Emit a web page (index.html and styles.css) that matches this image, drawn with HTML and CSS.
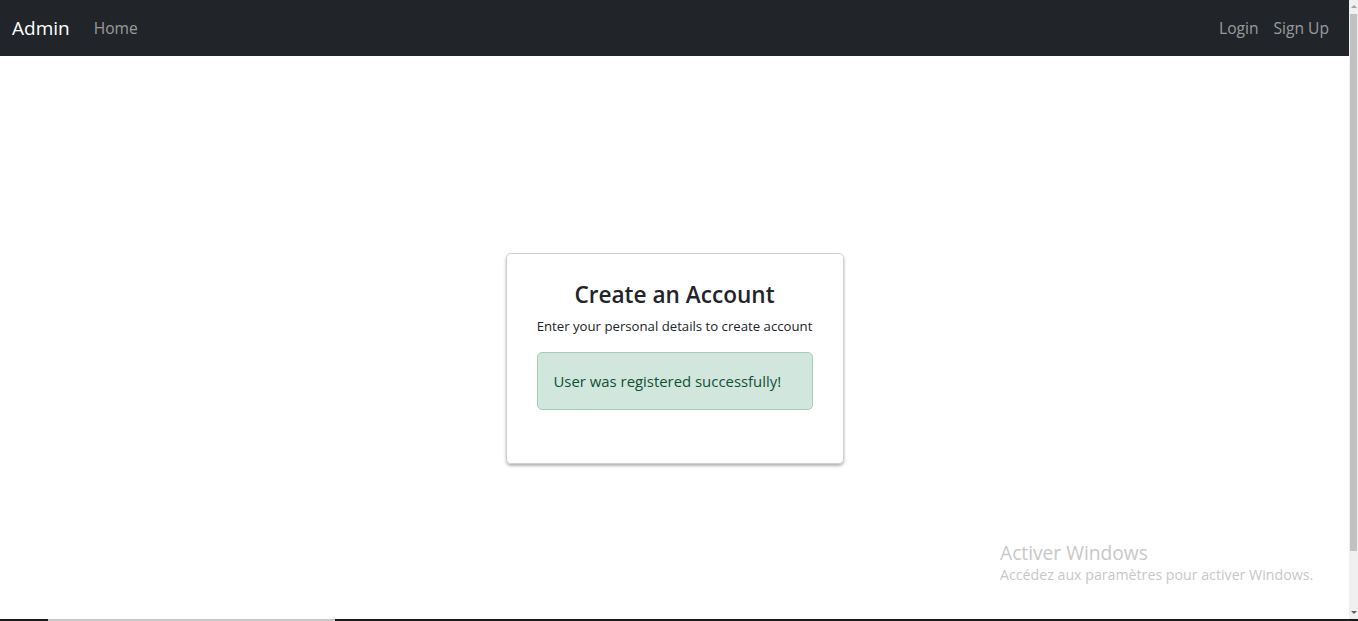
FILE: index.html
```html
<!DOCTYPE html>
<html lang="fr">
<head>
<meta charset="utf-8">
<title>Admin</title>
<link rel="stylesheet" href="styles.css">
</head>
<body>
<div class="screen">
  <div class="viewport">
    <nav class="navbar">
      <div class="nav-left">
        <a class="brand" href="#">Admin</a>
        <a class="nav-link" href="#">Home</a>
      </div>
      <div class="nav-right">
        <a class="nav-link" href="#">Login</a>
        <a class="nav-link" href="#">Sign Up</a>
      </div>
    </nav>
    <main class="content">
      <div class="card">
        <h4 class="card-title">Create an Account</h4>
        <p class="card-sub">Enter your personal details to create account</p>
        <div class="alert">User was registered successfully!</div>
      </div>
      <div class="watermark">
        <div class="wm-title">Activer Windows</div>
        <div class="wm-sub">Accédez aux paramètres pour activer Windows.</div>
      </div>
    </main>
  </div>
  <div class="scrollbar">
    <div class="sb-arrow sb-up"></div>
    <div class="sb-thumb"></div>
    <div class="sb-arrow sb-down"></div>
  </div>
</div>
<div class="taskbar-edge">
  <div class="edge-dark edge-a"></div>
  <div class="edge-light"></div>
  <div class="edge-dark edge-b"></div>
</div>
</body>
</html>
```
FILE: styles.css
```css
* { box-sizing: border-box; }
html, body {
  margin: 0;
  padding: 0;
  height: 621px;
  overflow: hidden;
  background: #fff;
}
body {
  font-family: "Open Sans", "Noto Sans", sans-serif;
  color: #212529;
  display: flex;
  flex-direction: column;
}
.screen {
  display: flex;
  height: 619px;
}
.viewport {
  width: 1349px;
  display: flex;
  flex-direction: column;
}
.navbar {
  height: 56px;
  background: #212529;
  display: flex;
  align-items: center;
  justify-content: space-between;
  padding: 0 20px 0 12px;
}
.nav-left, .nav-right {
  display: flex;
  align-items: center;
}
.brand {
  color: #fff;
  text-decoration: none;
  font-size: 19px;
  margin-right: 24px;
}
.nav-link {
  color: rgba(255,255,255,0.55);
  text-decoration: none;
  font-size: 15.6px;
}
.nav-right .nav-link + .nav-link { margin-left: 15px; }
.content {
  flex: 1;
  position: relative;
  display: flex;
  justify-content: center;
  padding-top: 197px;
}
.card {
  width: 338px;
  height: 211px;
  border: 1px solid #d0d0d0;
  border-radius: 5px;
  box-shadow: 0 2px 3px rgba(0,0,0,0.3);
  padding: 25px 30px;
  text-align: center;
}
.card-title {
  margin: 0;
  font-size: 22.6px;
  font-weight: 600;
  line-height: 32px;
}
.card-sub {
  margin: 6px 0 17px;
  font-size: 13.2px;
  line-height: 18px;
  white-space: nowrap;
}
.alert {
  height: 58px;
  background: #d1e7dd;
  border: 1px solid #a3cfbb;
  border-radius: 5px;
  color: #0f5132;
  font-size: 14.9px;
  text-align: left;
  padding: 0 16px;
  display: flex;
  align-items: center;
}
.watermark {
  position: absolute;
  left: 1000px;
  top: 484px;
  color: #c8c8c8;
}
.wm-title { font-size: 19.2px; line-height: 25px; }
.wm-sub { font-size: 14.2px; line-height: 18px; margin-top: 1px; }
.scrollbar {
  width: 9px;
  background: #f0f0f0;
  display: flex;
  flex-direction: column;
  align-items: center;
}
.sb-arrow {
  width: 0; height: 0;
  border-left: 3px solid transparent;
  border-right: 3px solid transparent;
}
.sb-up { border-bottom: 3px solid #a0a0a0; margin: 5px 0 6px; }
.sb-down { border-top: 3px solid #606060; margin: auto 0 5px; }
.sb-thumb {
  width: 7px;
  height: 537px;
  background: #c1c1c1;
}
.taskbar-edge {
  height: 2px;
  display: flex;
}
.edge-dark { background: #1a1a1a; }
.edge-a { width: 48px; }
.edge-light { width: 287px; background: #c8c8c8; }
.edge-b { flex: 1; }
```
